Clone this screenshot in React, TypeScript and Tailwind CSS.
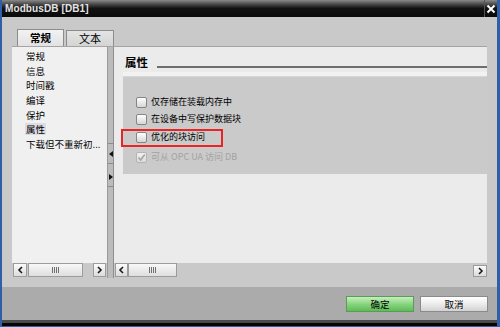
import React from "react";

const CJK = '"Noto Sans CJK SC", "Liberation Sans", sans-serif';

function Chevron({ dir }: { dir: "l" | "r" }) {
  return (
    <svg width="7" height="8" viewBox="0 0 7 8">
      {dir === "l" ? (
        <path d="M5 1 L2 4 L5 7" stroke="#1a1a1a" strokeWidth="1.6" fill="none" />
      ) : (
        <path d="M2 1 L5 4 L2 7" stroke="#1a1a1a" strokeWidth="1.6" fill="none" />
      )}
    </svg>
  );
}

function ScrollBtn({ dir, w }: { dir: "l" | "r"; w: string }) {
  return (
    <div
      className={`${w} h-full flex items-center justify-center border border-[#9c9c9c] bg-gradient-to-b from-[#fbfbfb] to-[#dcdcdc]`}
    >
      <Chevron dir={dir} />
    </div>
  );
}

function Thumb({ w }: { w: string }) {
  return (
    <div
      className={`${w} h-full flex items-center justify-center border border-[#9c9c9c] bg-gradient-to-b from-[#f8f8f8] to-[#dedede]`}
    >
      <div className="flex gap-[1px]">
        <div className="w-[1px] h-[6px] bg-[#707070]" />
        <div className="w-[1px] h-[6px] bg-[#707070]" />
        <div className="w-[1px] h-[6px] bg-[#707070]" />
        <div className="w-[1px] h-[6px] bg-[#707070]" />
      </div>
    </div>
  );
}

function Checkbox({ checked, disabled }: { checked?: boolean; disabled?: boolean }) {
  return (
    <div
      className={`w-[11px] h-[11px] rounded-[2px] border flex items-center justify-center shrink-0 ${
        disabled
          ? "border-[#b4b4b4] bg-gradient-to-b from-[#f0f0f0] to-[#dadada]"
          : "border-[#858585] bg-gradient-to-b from-[#fefefe] to-[#d6d6d6]"
      }`}
    >
      {checked && (
        <svg width="9" height="9" viewBox="0 0 9 9">
          <path d="M1.5 4.5 L3.6 7 L7.8 1.5" stroke="#a6a6a6" strokeWidth="1.7" fill="none" />
        </svg>
      )}
    </div>
  );
}

export default function App() {
  const items = ["常规", "信息", "时间戳", "编译", "保护", "属性", "下载但不重新初..."];
  return (
    <div
      className="w-[500px] h-[327px] bg-[#2f5fa8] pl-[2px] pr-[3px] pb-[1px] flex flex-col overflow-hidden"
      style={{ fontFamily: CJK }}
    >
      {/* Title bar */}
      <div className="h-[17px] shrink-0 flex items-stretch bg-gradient-to-b from-[#8a8a8a] via-[#111111] to-[#0a0a0a]">
        <div
          className="flex-1 flex items-center pl-[3px] text-[10px] font-bold text-[#e4e4e4] tracking-[0.1px]"
          style={{ fontFamily: '"Liberation Sans", sans-serif' }}
        >
          ModbusDB [DB1]
        </div>
        <div className="w-[13px] border-l border-[#555] flex items-center justify-center">
          <svg width="10" height="10" viewBox="0 0 10 10">
            <path d="M1.5 1.5 L8.5 8.5 M8.5 1.5 L1.5 8.5" stroke="#ffffff" strokeWidth="2" />
          </svg>
        </div>
      </div>

      {/* Body */}
      <div className="h-[270px] shrink-0 bg-[#c9c9c9] pl-[10px] pr-[10px] pt-[12px] pb-[9px] flex flex-col">
        {/* Tabs */}
        <div className="flex h-[17px] pl-[5px] shrink-0">
          <div className="w-[47px] h-[17px] border border-b-0 border-[#8c8c8c] bg-gradient-to-b from-[#f2f2f2] to-[#e2e2e2] flex items-center justify-center text-[10.5px] font-bold text-black">
            常规
          </div>
          <div className="w-[48px] h-[16px] mt-[1px] ml-[2px] border border-b-0 border-[#8c8c8c] bg-gradient-to-b from-[#e4e4e4] to-[#d4d4d4] flex items-center justify-center text-[11px] text-black">
            文本
          </div>
        </div>
        {/* Panel */}
        <div className="flex-1 flex border-t border-[#a4a4a4]">
          {/* Left column */}
          <div className="w-[95px] flex flex-col bg-[#f0f0f0]">
            <div className="flex-1 pt-[2px]">
              {items.map((t) => (
                <div key={t} className="h-[14.6px] flex items-center pl-[14px]">
                  <span
                    className={`text-[9.5px] leading-[12px] text-black ${
                      t === "属性" ? "bg-[#dcdce4] px-[1px] -ml-[1px]" : ""
                    }`}
                  >
                    {t}
                  </span>
                </div>
              ))}
            </div>
            <div className="h-[15px] flex bg-[#c9c9c9] pl-[1px] pr-[1px] pb-[1px]">
              <ScrollBtn dir="l" w="w-[14px]" />
              <div className="w-[1px]" />
              <Thumb w="w-[55px]" />
              <div className="flex-1" />
              <ScrollBtn dir="r" w="w-[13px]" />
            </div>
          </div>

          {/* Splitter */}
          <div className="w-[7px] flex bg-[#d4d4d4]">
            <div className="w-[1px] bg-[#9a9a9a]" />
            <div className="flex-1 flex flex-col items-center bg-[#bcbcbc] border-r border-[#8e8e8e]">
              <div className="h-[96px]" />
              <div className="w-full h-[1px] bg-[#8a8a8a]" />
              <div className="h-[7px]" />
              <svg width="4" height="6" viewBox="0 0 4 6">
                <path d="M4 0 L0 3 L4 6 Z" fill="#111" />
              </svg>
              <div className="h-[6px]" />
              <div className="w-full h-[1px] bg-[#8a8a8a]" />
              <div className="h-[10px]" />
              <svg width="4" height="6" viewBox="0 0 4 6">
                <path d="M0 0 L4 3 L0 6 Z" fill="#111" />
              </svg>
              <div className="h-[6px]" />
              <div className="w-full h-[1px] bg-[#8a8a8a]" />
            </div>
          </div>

          {/* Right column */}
          <div className="flex-1 flex flex-col bg-[#ebebeb]">
            <div className="flex-1 flex flex-col">
              <div className="h-[16px] mt-[8px] flex items-center pl-[11px]">
                <span className="text-[11.5px] font-bold text-black leading-none">属性</span>
                <div className="flex-1 ml-[9px] h-[2px] mt-[8px] bg-[#6e6e6e]" />
              </div>
              <div className="h-[4px] mt-[1px] bg-[#f2f2f2] ml-[9px]" />
              <div className="h-[1px] bg-[#d6d6d6] ml-[9px]" />
              <div className="relative ml-[9px] h-[97px] bg-[#cacaca] pl-[13px] pt-[18px] flex flex-col">
                <div className="h-[14px] flex items-center gap-[4px]">
                  <Checkbox />
                  <span className="text-[9px] text-black">仅存储在装载内存中</span>
                </div>
                <div className="h-[14px] mt-[3px] flex items-center gap-[4px]">
                  <Checkbox />
                  <span className="text-[9px] text-black">在设备中写保护数据块</span>
                </div>
                <div className="h-[14px] mt-[4px] flex items-center gap-[4px]">
                  <Checkbox />
                  <span className="text-[9px] text-black">优化的块访问</span>
                </div>
                <div className="h-[14px] mt-[6px] flex items-center gap-[4px]">
                  <Checkbox checked disabled />
                  <span className="text-[9px] text-[#a2a2a2]">可从 OPC UA 访问 DB</span>
                </div>
                <div className="absolute left-[-2px] top-[52px] w-[102px] h-[18px] border-2 border-[#e82424]" />
              </div>
            </div>
            <div className="h-[15px] flex bg-[#c9c9c9] pl-[1px] pb-[1px]">
              <ScrollBtn dir="l" w="w-[13px]" />
              <Thumb w="w-[49px]" />
              <div className="flex-1" />
              <div className="pt-[2px] h-full flex">
                <ScrollBtn dir="r" w="w-[14px]" />
              </div>
            </div>
          </div>
        </div>
      </div>

      {/* Footer */}
      <div className="h-[33px] shrink-0 bg-[#ababab] flex justify-end items-start pt-[9px] pr-[9px] gap-[6px]">
        <div className="w-[68px] h-[16px] border border-[#5b9a58] bg-gradient-to-b from-[#c4f0bc] via-[#88d480] to-[#5cbc56] flex items-center justify-center text-[9.5px] text-black">
          确定
        </div>
        <div className="w-[68px] h-[16px] border border-[#8a8a8a] bg-gradient-to-b from-[#ffffff] via-[#ececec] to-[#d2d2d2] flex items-center justify-center text-[9.5px] text-black">
          取消
        </div>
      </div>
      <div className="h-[3px] shrink-0 bg-[#4a4a4a]" />
      <div className="flex-1 bg-[#050505]" />
    </div>
  );
}
